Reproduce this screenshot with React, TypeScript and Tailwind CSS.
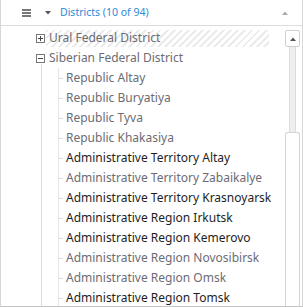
import * as React from "react"

const children = [
  { name: "Republic Altay", dim: true },
  { name: "Republic Buryatiya", dim: true },
  { name: "Republic Tyva", dim: true },
  { name: "Republic Khakasiya", dim: true },
  { name: "Administrative Territory Altay", dim: false },
  { name: "Administrative Territory Zabaikalye", dim: true },
  { name: "Administrative Territory Krasnoyarsk", dim: false },
  { name: "Administrative Region Irkutsk", dim: false },
  { name: "Administrative Region Kemerovo", dim: false },
  { name: "Administrative Region Novosibirsk", dim: true },
  { name: "Administrative Region Omsk", dim: true },
  { name: "Administrative Region Tomsk", dim: false },
]

function Toggle({ open }: { open: boolean }) {
  return (
    <svg width="9" height="9" viewBox="0 0 9 9" className="shrink-0">
      <rect x="0.5" y="0.5" width="8" height="8" fill="white" stroke="#777" />
      <path d="M2 4.5h5" stroke="#444" />
      {!open && <path d="M4.5 2v5" stroke="#444" />}
    </svg>
  )
}

export default function App() {
  return (
    <div
      className="w-[303px] h-[307px] overflow-hidden bg-white border-x border-b border-x-[#d6d6d6] border-b-[#c4c4c4] flex flex-col text-[12px]"
      style={{ fontFamily: '"Noto Sans", "Open Sans", sans-serif' }}
    >
      {/* header */}
      <div className="h-[26px] shrink-0 flex items-center border-b border-[#dcdcdc] pr-[14px]">
        <div className="ml-[21px] flex flex-col gap-[1px] w-[9px]">
          <div className="h-[2px] bg-[#777]" />
          <div className="h-[2px] bg-[#777]" />
          <div className="h-[2px] bg-[#777]" />
        </div>
        <svg width="6" height="4" viewBox="0 0 6 4" className="ml-[14px]">
          <path d="M0 0h6L3 3.5z" fill="#555" />
        </svg>
        <span className="ml-[9px] text-[10.5px] text-[#2d8ad8] leading-none">Districts (10 of 94)</span>
        <svg width="6" height="4" viewBox="0 0 6 4" className="ml-auto">
          <path d="M3 0.5L6 4H0z" fill="#aaa" />
        </svg>
      </div>

      <div className="flex flex-1 min-h-0">
        {/* tree */}
        <div className="flex-1 relative pt-[2px]">
          <div className="absolute left-[40px] top-[38px] bottom-0 w-px bg-[#dcdcdc]" />
          <div className="absolute left-[57px] top-[42px] bottom-0 w-px bg-[#e6e6e6]" />

          <div className="h-[20px] flex items-center pl-[35px]">
            <Toggle open={false} />
            <div className="ml-[1px] h-[17px] w-[223px] flex items-center pl-[3px] text-[#6c6c74] bg-[repeating-linear-gradient(135deg,#ebebeb_0px,#ebebeb_2px,#ffffff_2px,#ffffff_5px)]">
              Ural Federal District
            </div>
          </div>
          <div className="h-[20px] flex items-center pl-[35px]">
            <Toggle open={true} />
            <span className="ml-[4px] text-[#6c6c74]">Siberian Federal District</span>
          </div>
          {children.map((c) => (
            <div key={c.name} className="h-[20px] flex items-center pl-[57px] relative">
              <div className="w-[5px] h-px bg-[#dcdcdc]" />
              <span className={"ml-[3px] whitespace-nowrap " + (c.dim ? "text-[#6c6c74]" : "text-[#1e1e1e]")}>
                {c.name}
              </span>
            </div>
          ))}
        </div>

        {/* scrollbar */}
        <div className="w-[17px] shrink-0 flex flex-col items-start pt-[4px] pr-[2px]">
          <div className="w-[15px] h-[17px] rounded-[2px] border border-[#cfcfcf] bg-white flex items-center justify-center">
            <svg width="6" height="4" viewBox="0 0 6 4">
              <path d="M3 0.5L6 4H0z" fill="#555" />
            </svg>
          </div>
          <div className="ml-[4px] w-[7px] h-[85px] bg-[#eeeeee] border-x border-[#dddddd]" />
          <div className="w-[15px] flex-1 rounded-t-[3px] border border-b-0 border-[#d4d4d4] bg-white" />
        </div>
      </div>
    </div>
  )
}
